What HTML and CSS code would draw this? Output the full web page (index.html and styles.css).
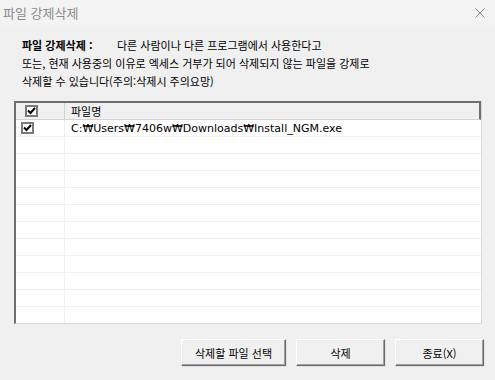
FILE: index.html
```html
<!DOCTYPE html>
<html lang="ko">
<head>
    <meta charset="UTF-8">
    <title>파일 강제삭제</title>
    <link rel="stylesheet" href="styles.css">
</head>
<body>
    <div class="window">
        <div class="titlebar">
            <span class="title">파일 강제삭제</span>
            <svg class="close" width="10" height="10" viewBox="0 0 10 10">
                <path d="M0.5 0.5 L9.5 9.5 M9.5 0.5 L0.5 9.5" stroke="#8a8a8a" stroke-width="1" fill="none"/>
            </svg>
        </div>
        <div class="content">
            <div class="intro">
                <p class="line"><b class="label">파일 강제삭제 :</b><span>다른 사람이나 다른 프로그램에서 사용한다고</span></p>
                <p class="line">또는, 현재 사용중의 이유로 엑세스 거부가 되어 삭제되지 않는 파일을 강제로</p>
                <p class="line">삭제할 수 있습니다(주의:삭제시 주의요망)</p>
            </div>
            <div class="list">
                <div class="row head">
                    <div class="cell check">
                        <span class="box"><svg width="9" height="8" viewBox="0 0 9 8"><path d="M1 3.5 L3.5 6 L8 1" stroke="#000" stroke-width="2" fill="none"/></svg></span>
                    </div>
                    <div class="cell name">파일명</div>
                </div>
                <div class="row">
                    <div class="cell check">
                        <span class="box"><svg width="9" height="8" viewBox="0 0 9 8"><path d="M1 3.5 L3.5 6 L8 1" stroke="#000" stroke-width="2" fill="none"/></svg></span>
                    </div>
                    <div class="cell name path">C:₩Users₩7406w₩Downloads₩Install_NGM.exe</div>
                </div>
                <div class="row"><div class="cell check"></div><div class="cell name"></div></div>
                <div class="row"><div class="cell check"></div><div class="cell name"></div></div>
                <div class="row"><div class="cell check"></div><div class="cell name"></div></div>
                <div class="row"><div class="cell check"></div><div class="cell name"></div></div>
                <div class="row"><div class="cell check"></div><div class="cell name"></div></div>
                <div class="row"><div class="cell check"></div><div class="cell name"></div></div>
                <div class="row"><div class="cell check"></div><div class="cell name"></div></div>
                <div class="row"><div class="cell check"></div><div class="cell name"></div></div>
                <div class="row"><div class="cell check"></div><div class="cell name"></div></div>
                <div class="row"><div class="cell check"></div><div class="cell name"></div></div>
                <div class="row last"><div class="cell check"></div><div class="cell name"></div></div>
            </div>
            <div class="buttons">
                <button class="btn wide">삭제할 파일 선택</button>
                <button class="btn">삭제</button>
                <button class="btn">종료(X)</button>
            </div>
        </div>
    </div>
</body>
</html>
```

FILE: styles.css
```css
* {
    box-sizing: border-box;
}
body {
    margin: 0;
    padding: 0;
    font-family: "Noto Sans CJK KR", "Noto Sans", sans-serif;
    font-size: 11px;
    color: #000;
    background-color: #f0f0f0;
}
.window {
    width: 495px;
    height: 380px;
    background-color: #f0f0f0;
    border-bottom-left-radius: 8px;
    overflow: hidden;
}
.titlebar {
    height: 25px;
    background-color: #f3f3f3;
    display: flex;
    align-items: center;
    justify-content: space-between;
    padding: 0 10px 0 3px;
}
.title {
    color: #8c8c8c;
    font-size: 13px;
}
.content {
    padding: 11px 11px 0 14px;
}
.intro {
    padding-left: 8px;
    height: 65px;
}
.line {
    margin: 0;
    height: 18px;
    line-height: 18px;
    white-space: nowrap;
}
.label {
    display: inline-block;
    width: 95px;
}
.list {
    width: 468px;
    border-left: 2px solid #6e6e6e;
    border-right: 1px solid #dadada;
    border-bottom: 1px solid #dadada;
    background-color: #fff;
}
.row {
    display: flex;
    height: 17px;
    border-bottom: 1px solid #f0f0f0;
}
.row.last {
    height: 16px;
    border-bottom: none;
}
.row.head {
    height: 19px;
    background-color: #f0f0f0;
    border-top: 2px solid #6e6e6e;
    border-right: 2px solid #6e6e6e;
    border-bottom: 1px solid #d4d4d4;
}
.cell {
    display: flex;
    align-items: center;
}
.check {
    width: 49px;
    padding-left: 5px;
    border-right: 1px solid #f0f0f0;
}
.head .check {
    padding-left: 9px;
    border-right: 1px solid #d0d0d0;
}
.name {
    padding-left: 6px;
    flex: 1;
}
.path {
    font-family: "DejaVu Sans", sans-serif;
    font-size: 11px;
}
.box {
    width: 13px;
    height: 12px;
    border: 2px solid #7a7a7a;
    background-color: #fff;
    display: flex;
    align-items: center;
    justify-content: center;
}
.buttons {
    display: flex;
    justify-content: flex-end;
    gap: 10px;
    margin-top: 15px;
}
.btn {
    width: 89px;
    height: 27px;
    font-family: "Noto Sans CJK KR", sans-serif;
    font-size: 11px;
    color: #000;
    background-color: #f0f0f0;
    border: 1px solid;
    border-color: #fff #6a6a6a #6a6a6a #fff;
    box-shadow: inset -1px -1px 0 #a0a0a0, 1px 1px 0 #e3e3e3;
    padding: 0;
}
.btn.wide {
    width: 105px;
}
```
